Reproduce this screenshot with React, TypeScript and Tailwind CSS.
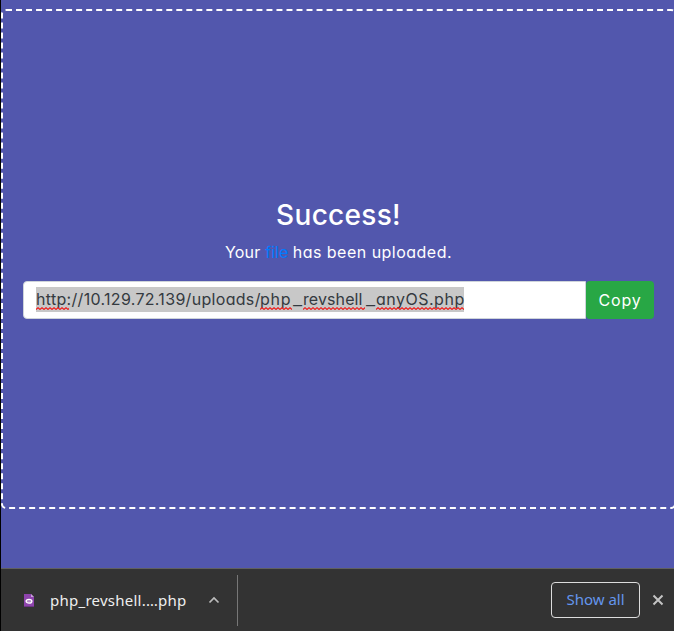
import React from "react";

function Squiggle({ className }: { className: string }) {
  const points = Array.from({ length: 50 }, (_, i) => `${i * 2},${i % 2 === 0 ? 2.5 : 0.7}`).join(" ");
  return (
    <svg className={`absolute h-[3px] ${className}`} aria-hidden="true">
      <polyline points={points} fill="none" stroke="#f01818" strokeWidth="1.1" />
    </svg>
  );
}

function FileIcon() {
  return (
    <svg width="10" height="13" viewBox="0 0 10 13" aria-hidden="true">
      <path d="M0 0H7L10 3V13H0Z" fill="#8e44ad" />
      <path d="M7 0L10 3H7Z" fill="#c8a2d9" />
      <path d="M0 12H10V13H0Z" fill="#6d3585" />
      <ellipse cx="5" cy="7.2" rx="2.9" ry="1.9" fill="#b58bc7" stroke="#fff" strokeWidth="1.3" />
    </svg>
  );
}

function UploadResult() {
  return (
    <main className="flex h-[500px] w-[675px] shrink-0 flex-col items-center rounded-[5px] border-2 border-dashed border-white px-5 pt-[187px] font-[Inter,sans-serif] [font-feature-settings:'cv11'] text-white">
      <h3 className="mb-2 h-[34px] whitespace-nowrap text-[28px] leading-[34px] font-medium tracking-[0.3px]">Success!</h3>
      <p className="mb-[17px] h-6 whitespace-nowrap text-base leading-6 tracking-[0.48px]">
        <span className="tracking-[0.2px]">Your </span>
        <a className="tracking-[0px] text-[#007bff]">file</a>
        <span className="tracking-[0px]"> </span>has been uploaded.
      </p>
      <div className="flex h-[38px] w-full">
        <div className="flex grow items-center rounded-l-[4px] border border-[#ced4da] bg-white pb-px pl-3">
          <div className="relative h-[25px] w-[428px] bg-[#c8c8c8] text-base leading-[25px] whitespace-nowrap text-[#343a40]">
            <div className="flex">
              <span className="w-[224px] tracking-[0.31px]">http://10.129.72.139/uploads/</span>
              <span className="w-[32px] tracking-[0.8px]">php</span>
              <span className="flex w-[11px] scale-x-125 justify-center">_</span>
              <span className="w-[62px] tracking-[0.1px]">revshell</span>
              <span className="flex w-[11px] scale-x-125 justify-center">_</span>
              <span className="w-[88px] tracking-[0.5px]">anyOS.php</span>
            </div>
            <Squiggle className="top-[20px] left-0 w-[33px]" />
            <Squiggle className="top-[20px] left-[224px] w-[32px]" />
            <Squiggle className="top-[20px] left-[267px] w-[62px]" />
            <Squiggle className="top-[20px] left-[340px] w-[88px]" />
          </div>
        </div>
        <button className="w-[68px] rounded-[4px] bg-[#28a745] text-base tracking-[0.8px]">Copy</button>
      </div>
    </main>
  );
}

function DownloadBar() {
  return (
    <footer className="flex h-[63px] w-full items-center border-t border-[#606060] bg-[#333333] font-['Noto_Sans',sans-serif] text-[15px]">
      <div className="flex h-[51px] w-[237px] items-center border-r border-[#777777] pl-[23px]">
        <FileIcon />
        <span className="ml-4 w-[137px] whitespace-nowrap tracking-[0.25px] text-[#eeeeee]">php_revshell.…php</span>
        <svg className="ml-[21px]" width="12" height="8" viewBox="0 0 12 8" aria-hidden="true">
          <path d="M1.5 6.5L6 2L10.5 6.5" fill="none" stroke="#bdbdbd" strokeWidth="1.7" />
        </svg>
      </div>
      <button className="ml-auto h-9 w-[89px] rounded-[4px] border border-[#dddddd] pb-0.5 whitespace-nowrap text-[#6496ed]">Show all</button>
      <svg className="mr-[10px] ml-[12px]" width="12" height="12" viewBox="0 0 12 12" aria-hidden="true">
        <path d="M1.5 1.5L10.5 10.5M10.5 1.5L1.5 10.5" stroke="#c4c4c4" strokeWidth="2" />
      </svg>
    </footer>
  );
}

export default function App() {
  return (
    <div className="flex h-[631px] w-[674px] flex-col overflow-hidden border-l border-black bg-[#5257ad]">
      <div className="h-[568px] shrink-0 pt-[9px]">
        <UploadResult />
      </div>
      <DownloadBar />
    </div>
  );
}
